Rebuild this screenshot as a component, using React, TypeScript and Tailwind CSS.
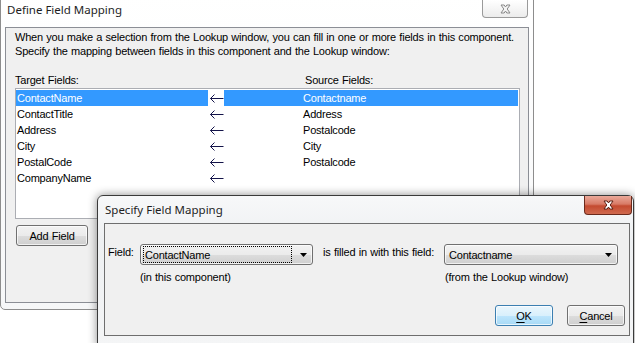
const rows: [string, string][] = [
  ["ContactName", "Contactname"],
  ["ContactTitle", "Address"],
  ["Address", "Postalcode"],
  ["City", "City"],
  ["PostalCode", "Postalcode"],
  ["CompanyName", ""],
];

const ui = "font-['Liberation_Sans',Arial,sans-serif] text-[11px] tracking-[-0.2px] [word-spacing:0.5px] leading-[14px] text-black";

function CloseGlyph({ fill, stroke }: { fill: string; stroke: string }) {
  return (
    <svg width="11" height="10" viewBox="0 0 11 10">
      <path
        d="M1 1 H4.2 L5.5 3 L6.8 1 H10 L7.2 5 L10 9 H6.8 L5.5 7 L4.2 9 H1 L3.8 5 Z"
        fill={fill}
        stroke={stroke}
        strokeWidth="1"
        strokeLinejoin="round"
      />
    </svg>
  );
}

function Arrow() {
  return (
    <svg width="15" height="9" viewBox="0 0 15 9">
      <path d="M1.5 4.5 H14.5 M5.5 0.5 L1.5 4.5 L5.5 8.5" fill="none" stroke="#14144a" strokeWidth="1" />
    </svg>
  );
}

function Caret() {
  return (
    <svg width="7" height="4" viewBox="0 0 7 4">
      <path d="M0 0 H7 L3.5 4 Z" fill="#000" />
    </svg>
  );
}

function WinButton({ children, primary, className }: { children: React.ReactNode; primary?: boolean; className: string }) {
  return (
    <div
      className={
        "h-[21px] rounded-[3px] border flex items-center justify-center shadow-[inset_0_0_0_1px_rgba(255,255,255,0.7)] " +
        (primary
          ? "border-[#3c7fb1] bg-[linear-gradient(to_bottom,#eaf6fd_0%,#d9f0fc_50%,#bee6fd_50%,#a7d9f5_100%)] "
          : "border-[#707070] bg-[linear-gradient(to_bottom,#f2f2f2_0%,#ebebeb_50%,#dddddd_50%,#cfcfcf_100%)] ") +
        className
      }
    >
      {children}
    </div>
  );
}

function Combo({ value, focused, className }: { value: string; focused?: boolean; className: string }) {
  return (
    <div
      className={
        "h-[21px] rounded-[3px] border border-[#707070] flex items-center pl-[2px] pr-[5px] shadow-[inset_0_0_0_1px_rgba(255,255,255,0.7)] bg-[linear-gradient(to_bottom,#f2f2f2_0%,#ebebeb_50%,#dddddd_50%,#cfcfcf_100%)] " +
        className
      }
    >
      <div
        className={
          "flex-1 h-[17px] flex items-center pl-[1px] mr-[8px] " +
          (focused ? "border border-dotted border-black" : "border border-transparent")
        }
      >
        {value}
      </div>
      <Caret />
    </div>
  );
}

export default function App() {
  return (
    <div className={"relative w-[635px] h-[343px] overflow-hidden bg-white " + ui}>
      {/* main window, inactive */}
      <div className="absolute left-0 top-[-8px] w-[534px] h-[318px] border border-[#8d8d8d] rounded-t-[7px] rounded-b-[5px] bg-[linear-gradient(to_bottom,#ffffff,#f6f7f8)] flex flex-col px-[4px]">
        <div className="h-[34px] pt-[9px] pl-[2px] font-['Noto_Sans','Open_Sans',sans-serif] text-[11.5px] tracking-normal [word-spacing:0] leading-[16px] text-[#1e1e1e]">
          Define Field Mapping
        </div>
        <div className="absolute left-[481px] top-[7px] w-[46px] h-[18px] rounded-b-[4px] border border-t-0 border-[#9a9a9a] bg-[linear-gradient(to_bottom,#ffffff,#ececec)] flex items-center justify-center">
          <CloseGlyph fill="#f4f4f4" stroke="#8a8a8a" />
        </div>
        <div className="w-[524px] h-[276px] border border-[#8b8e95] bg-[#f0f0f0] pl-[9px] pt-[2px] flex flex-col">
          <p>When you make a selection from the Lookup window, you can fill in one or more fields in this component.</p>
          <p>Specify the mapping between fields in this component and the Lookup window:</p>
          <div className="flex mt-[15px]">
            <div className="w-[290px]">Target Fields:</div>
            <div>Source Fields:</div>
          </div>
          <div className="mt-[1px] w-[505px] h-[131px] border border-[#abadb3] bg-white pt-[1px] pr-[1px] flex flex-col">
            {rows.map(([t, s], i) => (
              <div key={t} className="h-[16px] flex items-stretch">
                <div className={"w-[192px] pl-[1px] flex items-center " + (i === 0 ? "bg-[#3399ff] text-white" : "")}>{t}</div>
                <div className="w-[16px] flex items-center justify-center">
                  <Arrow />
                </div>
                <div className={"flex-1 pl-[79px] flex items-center " + (i === 0 ? "bg-[#3399ff] text-white" : "")}>{s}</div>
              </div>
            ))}
          </div>
          <WinButton className="mt-[6px] ml-[1px] w-[72px]">Add Field</WinButton>
        </div>
      </div>

      {/* specify dialog, active */}
      <div className="absolute left-[97px] top-[195px] w-[537px] h-[152px] border border-[#3a3a3a] rounded-t-[6px] bg-[linear-gradient(to_bottom,#f7f8f9,#eef0f2_30%,#f4f5f6)] shadow-[0_0_10px_rgba(0,0,0,0.45)] flex flex-col pl-[6px] pr-[3px]">
        <div className="h-[27px] pl-[1px] flex items-center font-['Noto_Sans','Open_Sans',sans-serif] text-[11.5px] tracking-normal [word-spacing:0] text-[#1e1e1e]">
          Specify Field Mapping
        </div>
        <div className="absolute right-[1px] top-0 w-[48px] h-[19px] rounded-b-[4px] border border-t-0 border-[#6b2a1c] bg-[linear-gradient(to_bottom,#eaa99a_0%,#d87a66_45%,#c44a30_55%,#d06a4f_100%)] flex items-center justify-center">
          <CloseGlyph fill="#ffffff" stroke="#5c2014" />
        </div>
        <div className="w-[526px] h-[113px] border border-[#6e6e6e] bg-[#f0f0f0] flex flex-col">
          <div className="flex items-start pl-[3px] pt-[20px]">
            <div className="w-[32px] mt-[1px]">Field:</div>
            <Combo value="ContactName" focused className="w-[173px]" />
            <div className="ml-[10px] w-[121px] mt-[1px]">is filled in with this field:</div>
            <Combo value="Contactname" className="w-[174px]" />
          </div>
          <div className="flex pl-[3px] mt-[5px]">
            <div className="w-[32px]" />
            <div className="w-[173px]">(in this component)</div>
            <div className="ml-[10px] w-[122px]" />
            <div>(from the Lookup window)</div>
          </div>
          <div className="flex justify-end gap-[14px] pr-[4px] mt-[21px]">
            <WinButton primary className="w-[58px]">
              <span className="underline underline-offset-2">O</span>K
            </WinButton>
            <WinButton className="w-[58px]">
              <span className="underline underline-offset-2">C</span>ancel
            </WinButton>
          </div>
        </div>
      </div>
    </div>
  );
}
